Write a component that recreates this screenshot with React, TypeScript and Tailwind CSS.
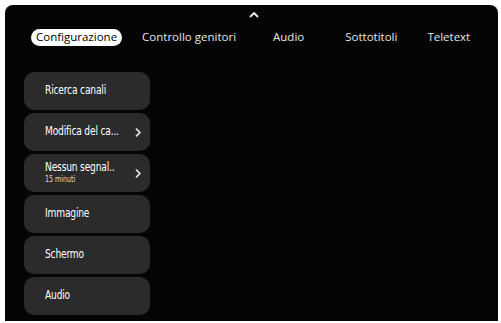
import React from 'react';

const tabs = ['Configurazione', 'Controllo genitori', 'Audio', 'Sottotitoli', 'Teletext'];

const items: { label: string; sub?: string; arrow?: boolean }[] = [
  { label: 'Ricerca canali' },
  { label: 'Modifica del ca...', arrow: true },
  { label: 'Nessun segnal..', sub: '15 minuti', arrow: true },
  { label: 'Immagine' },
  { label: 'Schermo' },
  { label: 'Audio' },
];

const Chevron = () => (
  <svg width="7" height="9" viewBox="0 0 7 9" fill="none" stroke="#e8e8e8" strokeWidth="1.7" strokeLinecap="round" strokeLinejoin="round">
    <path d="M1.5 1.2 5 4.5 1.5 7.8" />
  </svg>
);

export default function App() {
  return (
    <div className="w-[501px] h-[323px] bg-white pl-[5px] pr-[3px] pt-[5px] pb-[2px]">
      <div className="h-full bg-[#050505] rounded-t-[8px] flex flex-col">
        {/* top caret */}
        <div className="h-[16px] flex justify-center pt-[6px] pl-[4px]">
          <svg width="10" height="7" viewBox="0 0 10 7" fill="none" stroke="#e8e8e8" strokeWidth="1.8" strokeLinecap="round" strokeLinejoin="round">
            <path d="M1.5 5.5 5 2l3.5 3.5" />
          </svg>
        </div>

        {/* tabs */}
        <div className="flex items-center h-[24px] mt-[4px] pl-[26px] text-[11.5px] text-[#e6e6e6] font-['Open_Sans',sans-serif]">
          {tabs.map((t, i) => (
            <div
              key={t}
              className={
                i === 0
                  ? 'bg-white text-black rounded-full px-[5px] h-[17px] flex items-center'
                  : i === 1
                  ? 'ml-[20px]'
                  : i === 2
                  ? 'ml-[37px]'
                  : i === 3
                  ? 'ml-[41px]'
                  : 'ml-[30px]'
              }
            >
              {t}
            </div>
          ))}
        </div>

        {/* menu list */}
        <div className="flex flex-col gap-[3px] mt-[23px] pl-[19px] w-[145px] font-['DejaVu_Sans_Condensed',sans-serif]">
          {items.map((it) => (
            <div
              key={it.label}
              className="h-[38px] bg-[#2b2b2b] rounded-[10px] flex items-center justify-between pl-[21px] pr-[8px] text-white"
            >
              <div className="flex flex-col leading-none origin-left scale-x-[0.88]">
                <span className="text-[11.5px] tracking-[-0.2px] whitespace-nowrap">{it.label}</span>
                {it.sub && <span className="text-[8px] text-[#dcdcdc] mt-[2px]">{it.sub}</span>}
              </div>
              {it.arrow && <Chevron />}
            </div>
          ))}
        </div>
      </div>
    </div>
  );
}
